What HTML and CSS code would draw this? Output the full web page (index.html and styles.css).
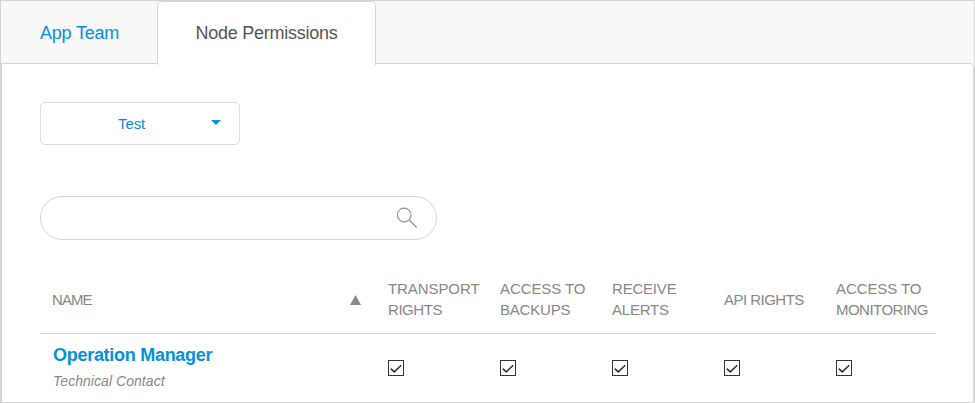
FILE: index.html
```html
<!DOCTYPE html>
<html lang="en">
<head>
<meta charset="utf-8">
<title>Node Permissions</title>
<link rel="stylesheet" href="styles.css">
</head>
<body>
<svg class="defs" width="0" height="0" aria-hidden="true">
  <symbol id="check" viewBox="0 0 14 14"><path d="M1.7 7.6 5.3 10.9 12.2 4.2" fill="none" stroke="#333" stroke-width="1.5"/></symbol>
</svg>
<div class="frame">
  <nav class="tabs">
    <a class="tab">App Team</a>
    <a class="tab active"><span>Node Permissions</span></a>
  </nav>
  <main class="panel">
    <div class="select"><span>Test</span><svg class="caret" width="10" height="5" viewBox="0 0 10 5"><path d="M0 0h10L5 5z" fill="#0590de"/></svg></div>
    <div class="search">
      <svg width="22" height="22" viewBox="0 0 22 22" fill="none" stroke="#999"><circle cx="8.2" cy="8" r="6.8" stroke-width="1.2"/><path d="M13 12.8 20.7 20.5" stroke-width="1.3"/></svg>
    </div>
    <table class="grid">
      <thead>
        <tr>
          <th class="name"><div class="sort"><span class="tighter">NAME</span><svg class="arrow" width="11" height="10" viewBox="0 0 11 10"><path d="M0 10 5.5 0 11 10z" fill="#888"/></svg></div></th>
          <th><span class="wide">TRANSPORT</span><br><span class="snug">RIGHTS</span></th>
          <th><span class="wide">ACCESS TO</span><br>BACKUPS</th>
          <th>RECEIVE<br>ALERTS</th>
          <th class="single"><span class="tight">API RIGHTS</span></th>
          <th><span class="wide">ACCESS TO</span><br><span class="tight">MONITORING</span></th>
        </tr>
      </thead>
      <tbody>
        <tr>
          <td class="name"><div class="person">Operation Manager</div><div class="role">Technical Contact</div></td>
          <td><svg class="box"><use href="#check"/></svg></td>
          <td><svg class="box"><use href="#check"/></svg></td>
          <td><svg class="box"><use href="#check"/></svg></td>
          <td><svg class="box"><use href="#check"/></svg></td>
          <td><svg class="box"><use href="#check"/></svg></td>
        </tr>
      </tbody>
    </table>
  </main>
</div>
</body>
</html>
```

FILE: styles.css
```css
* { box-sizing: border-box; }
body { margin: 0; font-family: "Liberation Sans", Arial, sans-serif; color: #888; overflow: hidden; }
.defs { display: none; }
.frame { height: 403px; border: 1px solid #d5d5d5; background: #f8f8f8; display: flex; flex-direction: column; }
.tabs { display: flex; flex: none; height: 62px; }
.tab { width: 156px; padding-left: 39px; font-size: 18px; line-height: 64px; letter-spacing: -0.2px; color: #0590de; white-space: nowrap; }
.tab.active { width: 219px; height: 64px; padding-left: 37.5px; line-height: 62px; letter-spacing: -0.25px; color: #555; background: #fff; border: 1px solid #d5d5d5; border-bottom: 0; border-radius: 5px 5px 0 0; position: relative; z-index: 1; }
.panel { flex: 1; min-height: 0; background: #fff; border: 1px solid #d5d5d5; border-bottom: 0; border-radius: 0 5px 0 0; padding: 38px 37px 0 38px; }
.select { width: 200px; height: 43px; border: 1px solid #ddd; border-radius: 5px; display: flex; align-items: center; justify-content: space-between; padding: 0 18px 0 77px; font-size: 15px; letter-spacing: -0.1px; color: #0590de; }
.caret { margin-top: -2px; }
.search { width: 397px; height: 44px; margin-top: 51px; border: 1px solid #d5d5d5; border-radius: 22px; display: flex; align-items: center; justify-content: flex-end; padding-right: 18px; }
.grid { width: 896px; margin-top: 25px; border-collapse: collapse; table-layout: fixed; }
th, td { width: 112px; padding: 0 0 0 12px; text-align: left; }
.name { width: 336px; }
th { height: 68px; font-size: 15px; font-weight: normal; line-height: 21px; letter-spacing: -0.2px; border-bottom: 1px solid #d5d5d5; white-space: nowrap; }
th.single { padding-top: 1px; }
.wide { letter-spacing: -0.08px; }
.snug { letter-spacing: -0.45px; }
.tight { letter-spacing: -0.52px; }
.tighter { letter-spacing: -0.95px; }
.sort { display: flex; align-items: center; justify-content: space-between; padding: 1px 15px 0 0; }
.arrow { margin-top: 1px; }
td { height: 68px; padding-top: 2px; }
td.name { padding: 0 0 0 13px; }
.person { font-size: 18px; font-weight: bold; line-height: 22px; letter-spacing: -0.28px; color: #0590de; }
.role { font-size: 14px; font-style: italic; line-height: 20px; letter-spacing: 0.05px; margin-top: 5px; }
.box { display: block; width: 16px; height: 16px; border: 1px solid #333; }
```
